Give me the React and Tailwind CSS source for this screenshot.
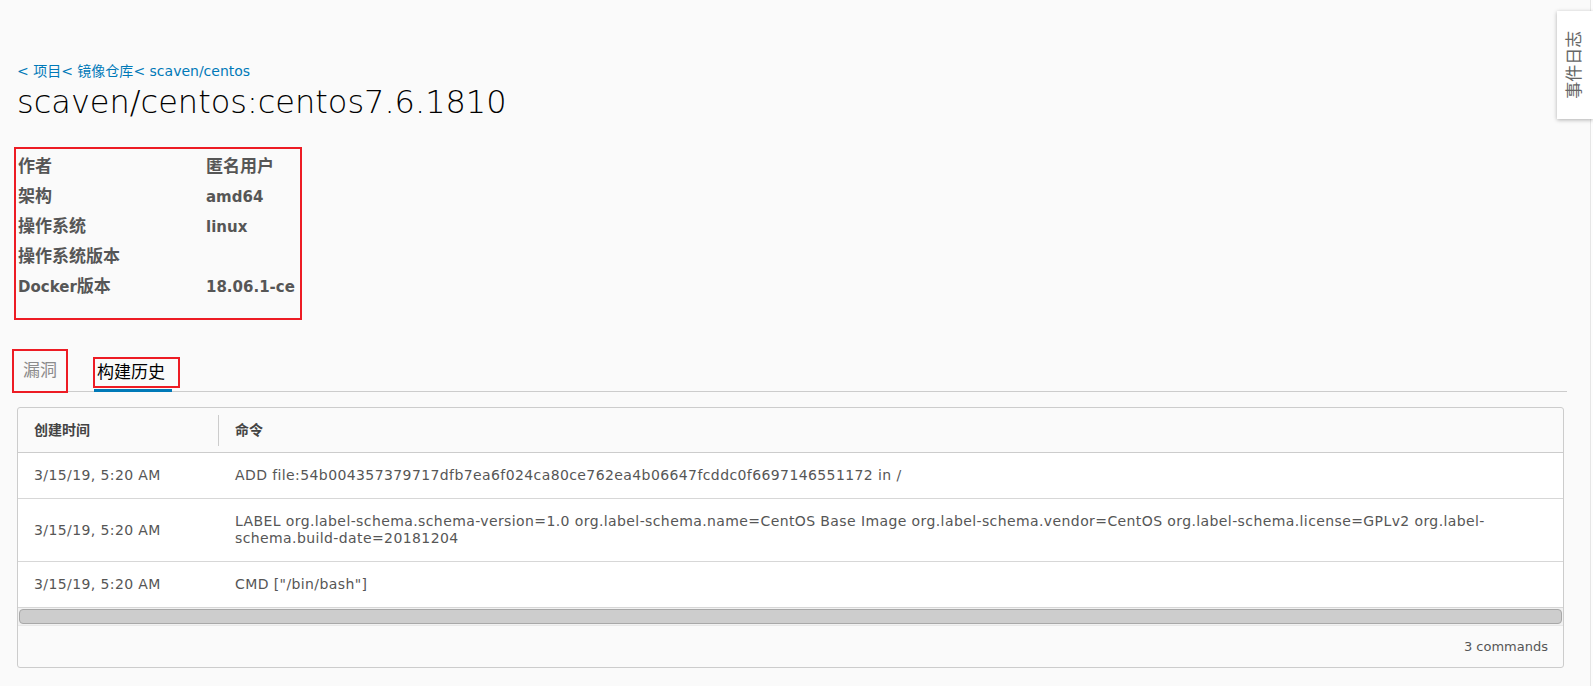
import React from 'react';

const rows = [
    { time: '3/15/19, 5:20 AM', cmd: 'ADD file:54b004357379717dfb7ea6f024ca80ce762ea4b06647fcddc0f6697146551172 in /' },
    {
        time: '3/15/19, 5:20 AM',
        cmd: 'LABEL org.label-schema.schema-version=1.0 org.label-schema.name=CentOS Base Image org.label-schema.vendor=CentOS org.label-schema.license=GPLv2 org.label-schema.build-date=20181204'
    },
    { time: '3/15/19, 5:20 AM', cmd: 'CMD ["/bin/bash"]' }
];

const info = [
    ['作者', '匿名用户'],
    ['架构', 'amd64'],
    ['操作系统', 'linux'],
    ['操作系统版本', ''],
    ['Docker版本', '18.06.1-ce']
];

// chinese glyphs render a little larger than the latin ones in the info block
const Mixed = ({ text }) =>
    text.split(/([\u4e00-\u9fff]+)/).filter(Boolean).map((part, i) =>
        /[\u4e00-\u9fff]/.test(part)
            ? <span key={i} className="text-[17px]">{part}</span>
            : <span key={i}>{part}</span>
    );

const App = () => {
    return (
        <div className="relative flex min-h-[686px] bg-[#fafafa] font-['DejaVu_Sans','Noto_Sans_CJK_SC',sans-serif] text-[#565656]">
            <main className="flex-1 pl-[17px] pr-[23px] pt-[61px]">
                <nav className="flex text-[14px] leading-[20px] text-[#0079b8]">
                    <a href="#">&lt; 项目</a>
                    <a href="#">&lt; 镜像仓库</a>
                    <a href="#">&lt; scaven/centos</a>
                </nav>
                <h1 className="text-[32px] leading-[42px] font-light text-black">scaven/centos:centos7.6.1810</h1>

                {/* image info */}
                <div className="mt-[24px] -ml-[3px] w-[288px] h-[173px] border-2 border-[#ed1c24] pt-[3px] pl-[2px]">
                    {info.map(([label, value]) => (
                        <div key={label} className="flex h-[30px] items-center text-[15px] font-bold">
                            <span className="w-[188px]"><Mixed text={label} /></span>
                            <span><Mixed text={value} /></span>
                        </div>
                    ))}
                </div>

                {/* tabs */}
                <div className="mt-[29px] flex items-end border-b border-[#cccccc]">
                    <button className="-ml-[5px] -mb-[2px] h-[44px] w-[56px] border-2 border-[#ed1c24] pl-[9px] text-left text-[17px] text-[#8c8c8c]">
                        漏洞
                    </button>
                    <div className="relative ml-[25px] h-[34px] w-[87px]">
                        <div className="h-[31px] border-2 border-[#ed1c24] pl-[2px] text-[17px] leading-[26px] text-black">构建历史</div>
                        <div className="absolute left-[1px] bottom-[-1px] h-[3px] w-[78px] bg-[#0079b8]" />
                    </div>
                </div>

                {/* build history */}
                <div className="mt-[15px] mr-[3px] rounded-[3px] border border-[#cccccc] bg-[#fafafa]">
                    <div className="flex h-[45px] items-center border-b border-[#cccccc] text-[14px] font-bold text-[#444]">
                        <div className="flex w-[201px] items-center justify-between pl-[16px]">
                            <span>创建时间</span>
                            <span className="h-[31px] w-px bg-[#cccccc]" />
                        </div>
                        <div className="pl-[16px]">命令</div>
                    </div>
                    {rows.map((r, i) => (
                        <div key={i} className="flex items-center border-b border-[#d7d7d7] bg-white text-[14px] leading-[17px] tracking-[0.4px]">
                            <div className="w-[201px] shrink-0 pl-[16px]">{r.time}</div>
                            <div className="flex-1 py-[14px] pl-[16px] pr-[24px]">{r.cmd}</div>
                        </div>
                    ))}
                    <div className="h-[17px] bg-[#f1f1f1] px-[1px] py-[1px]">
                        <div className="h-full rounded-[4px] border border-[#a8a8a8] bg-[#cdcdcd]" />
                    </div>
                    <div className="flex h-[42px] items-center justify-end border-t border-[#e8e8e8] pr-[15px] text-[13px]">
                        3 commands
                    </div>
                </div>
            </main>

            <aside className="w-[3px] border-l border-[#e6e6e6] bg-[#fdfdfd]" />

            {/* event log tab */}
            <div className="absolute right-0 top-[11px] flex h-[108px] w-[36px] items-center justify-center bg-white shadow-[0_1px_4px_rgba(0,0,0,0.3)]">
                <span className="-rotate-90 whitespace-nowrap text-[17px] text-[#666]">事件日志</span>
            </div>
        </div>
    );
};

export default App;
